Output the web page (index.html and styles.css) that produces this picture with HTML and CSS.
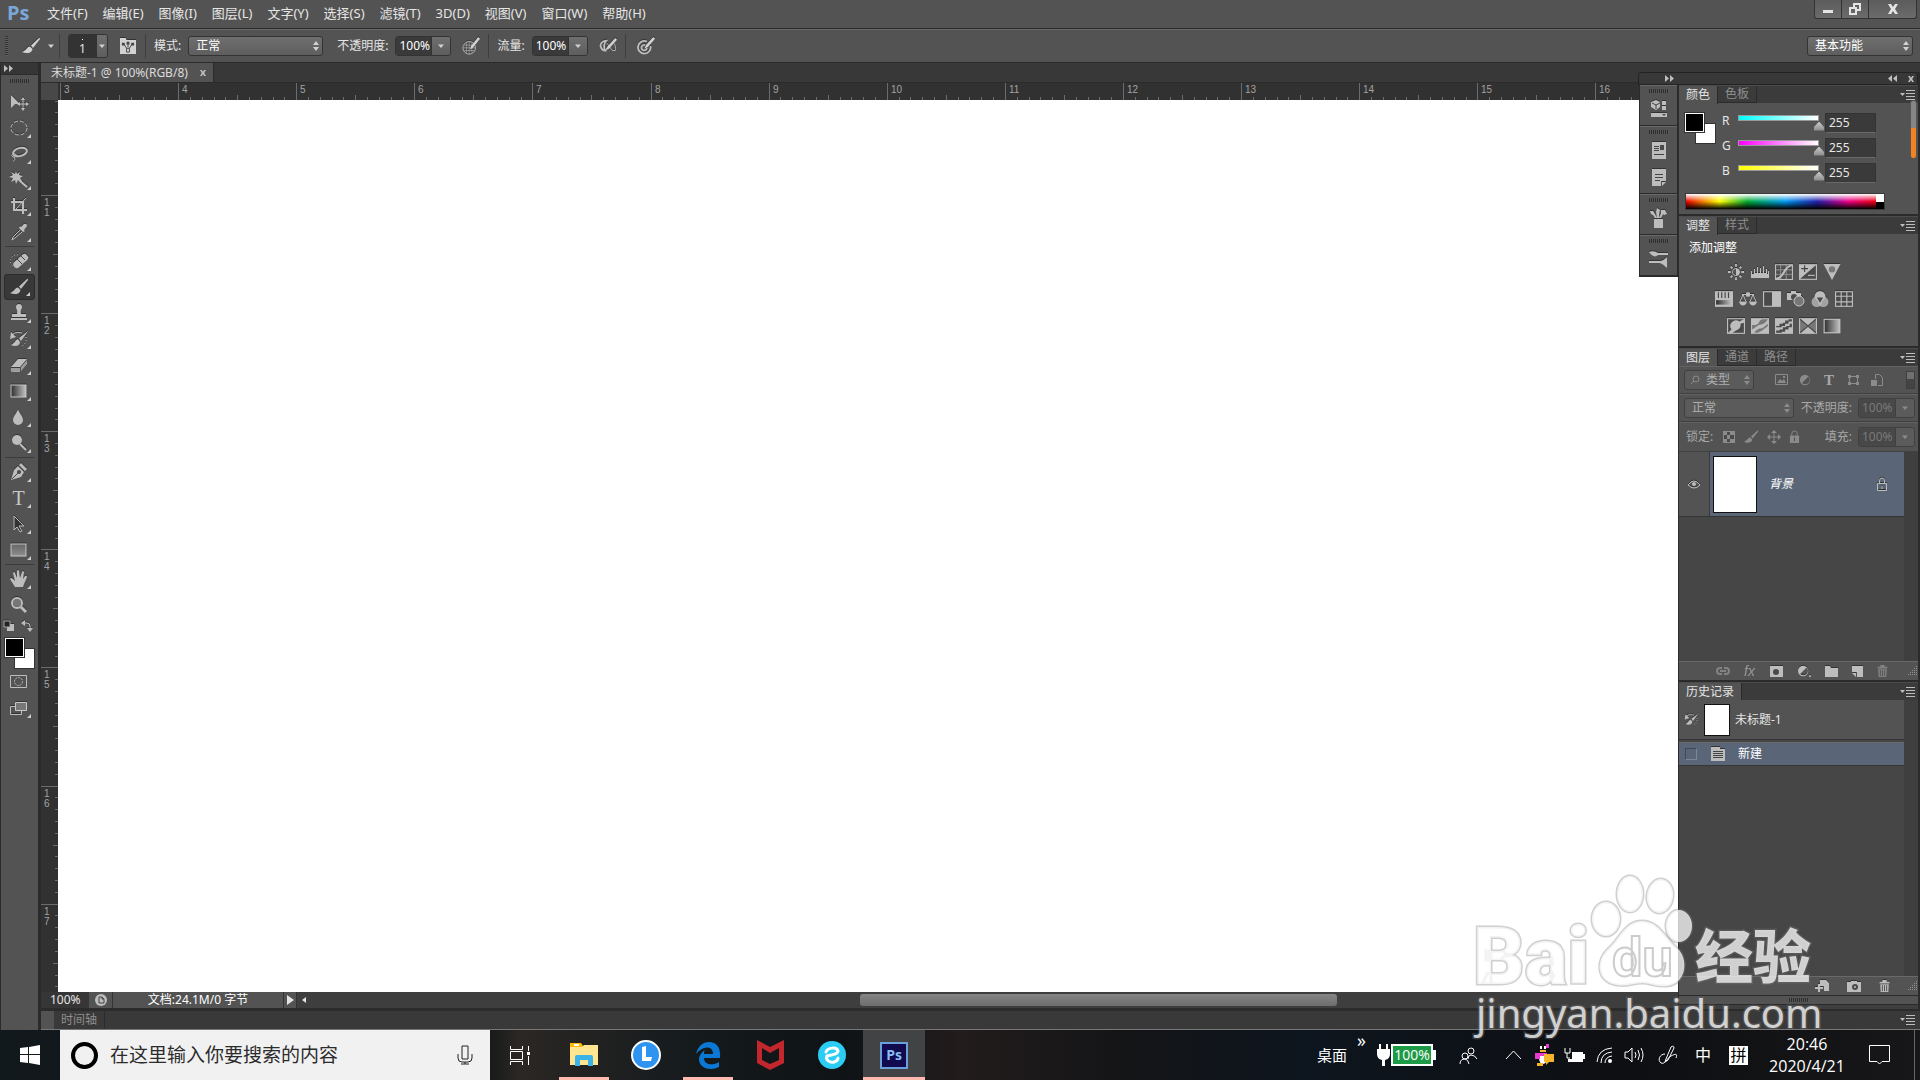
FILE: index.html
```html
<!DOCTYPE html>
<html lang="zh-CN">
<head>
    <meta charset="UTF-8">
    <meta name="viewport" content="width=device-width, initial-scale=1.0">
    <title>未标题-1 @ 100%(RGB/8)</title>
    <link rel="stylesheet" href="styles.css">
</head>
<body>
    <svg class="defs" aria-hidden="true">
        <defs>
            <linearGradient id="g-fade" x1="0" x2="1"><stop offset="0" stop-color="#2e2e2e"/><stop offset="1" stop-color="#c4c4c4"/></linearGradient>
            <linearGradient id="g-down" x1="0" x2="0" y1="0" y2="1"><stop offset="0" stop-color="#666"/><stop offset="1" stop-color="#8e8e8e"/></linearGradient>
        </defs>
        <symbol id="i-brush" viewBox="0 0 20 20"><path d="M18.500 1.500 L10 9.500 L12 12 L19 3 Z"/><path d="M9 10.500 C6 10.500 6 14 1 16 C5 18 11 17.500 11.500 13 Z"/></symbol>
        <symbol id="i-updown" viewBox="0 0 8 12"><path d="M4 1 L7 5 H1 Z M4 11 L7 7 H1 Z"/></symbol>
        <symbol id="i-caret" viewBox="0 0 8 8"><path d="M1 2.500 H7 L4 6 Z"/></symbol>
        <symbol id="i-menu" viewBox="0 0 16 10"><path d="M0 3 H5 L2.500 6 Z M6 0 H15 V1 H6 Z M6 3 H15 V4 H6 Z M6 6 H15 V7 H6 Z M6 9 H15 V10 H6 Z"/></symbol>
        <symbol id="i-fwd" viewBox="0 0 9 7"><path d="M0 0 L4 3.500 L0 7 Z M5 0 L9 3.500 L5 7 Z"/></symbol>
        <symbol id="i-back" viewBox="0 0 9 7"><path d="M4 0 L0 3.500 L4 7 Z M9 0 L5 3.500 L9 7 Z"/></symbol>
        <symbol id="i-close" viewBox="0 0 10 10"><path d="M0 0 H3 L5 3 L7 0 H10 L7 5 L10 10 H7 L5 7 L3 10 H0 L3 5 Z"/></symbol>
        <symbol id="i-trash" viewBox="0 0 12 14"><path d="M0 2 H3.500 V0 H8.500 V2 H12 V4 H0 Z M1 5 H11 L10.500 14 H1.500 Z"/><path class="cut" d="M3.500 6 V13 M6 6 V13 M8.500 6 V13"/></symbol>
        <symbol id="i-lock" viewBox="0 0 12 14"><path d="M1 6 H11 V14 H1 Z"/><path class="line" d="M3 6 V4 A3 3 0 0 1 9 4 V6"/><path class="cut" d="M6 8 V12"/></symbol>
        <symbol id="i-lock-open" viewBox="0 0 12 14"><path class="line" d="M1.500 6.500 H10.500 V13.500 H1.500 Z M3.500 6 V4 A2.500 3 0 0 1 8.500 4 V6 M6 9 V12"/></symbol>
        <symbol id="i-resize" viewBox="0 0 10 10"><path d="M8 0h1v1h-1z M6 2h1v1h-1z M8 2h1v1h-1z M4 4h1v1h-1z M6 4h1v1h-1z M8 4h1v1h-1z M2 6h1v1h-1z M4 6h1v1h-1z M6 6h1v1h-1z M8 6h1v1h-1z M0 8h1v1h-1z M2 8h1v1h-1z M4 8h1v1h-1z M6 8h1v1h-1z M8 8h1v1h-1z"/></symbol>
        <symbol id="i-history" viewBox="0 0 20 20"><path d="M19 2 L10 9 L12 12 Z M9 10 C6 11 6 14 2 16 C6 18 11 17 11 13 Z"/><path class="line" d="M2 8 C4 3 9 3 13 4"/><path d="M2 3 L1 10 L7 8 Z"/><path class="line" stroke-dasharray="1 2" d="M17 8 C18 12 16 16 12 17"/></symbol>
        <symbol id="i-halfcircle" viewBox="0 0 14 14"><path fill-rule="evenodd" d="M7 1 A6 6 0 1 1 7 13 A6 6 0 1 1 7 1 Z M3.500 10.500 A5 5 0 0 0 11 3 Z"/></symbol>
    </svg>

    <div class="app">
        <header class="menubar">
            <span class="logo">Ps</span>
            <nav class="menu">
                <button>文件(F)</button>
                <button>编辑(E)</button>
                <button>图像(I)</button>
                <button>图层(L)</button>
                <button>文字(Y)</button>
                <button>选择(S)</button>
                <button>滤镜(T)</button>
                <button>3D(D)</button>
                <button>视图(V)</button>
                <button>窗口(W)</button>
                <button>帮助(H)</button>
            </nav>
            <div class="window-buttons">
                <button aria-label="最小化"><svg width="10" height="10"><path d="M0 6 H10 V9 H0 Z"/></svg></button>
                <button aria-label="还原"><svg width="12" height="12"><path fill-rule="evenodd" d="M4 0 H12 V8 H8 V12 H0 V4 H4 Z M6 2 V4 H8 V6 H10 V2 Z M2 6 V10 H6 V6 Z"/></svg></button>
                <button class="wide" aria-label="关闭"><svg width="10" height="10"><use href="#i-close"/></svg></button>
            </div>
        </header>

        <div class="options">
            <span class="vgrip"></span>
            <button class="plain current-tool" aria-label="画笔工具"><svg class="icon" width="20" height="20"><use href="#i-brush"/></svg><svg width="8" height="8"><use href="#i-caret"/></svg></button>
            <span class="rule"></span>
            <div class="combo brush-size"><span class="size-value"><i></i>1</span><button aria-label="画笔预设"><svg width="8" height="8"><use href="#i-caret"/></svg></button></div>
            <button class="plain brush-panel" aria-label="切换画笔面板"><svg class="icon" width="16" height="16" viewBox="0 0 17 17"><path d="M0 0 H6 L7 2 H17 V17 H0 Z"/><path class="cut" d="M4 6 L7 11 M8.500 5 V10 M13 6 L10 11 M7 11 H10 V15 H7 Z"/><path class="blob" d="M2 5h3v3h-3z M7 4h3v3h-3z M12 5h3v3h-3z"/></svg></button>
            <span class="rule"></span>
            <label for="mode">模式:</label>
            <span class="select mode"><select id="mode"><option>正常</option></select><svg width="8" height="12"><use href="#i-updown"/></svg></span>
            <label for="opacity">不透明度:</label>
            <div class="combo"><input id="opacity" value="100%"><button aria-label="不透明度滑块"><svg width="8" height="8"><use href="#i-caret"/></svg></button></div>
            <button class="plain pressure" aria-label="不透明度压力"><svg class="icon" width="18" height="18" viewBox="0 0 20 20"><circle class="line" cx="8" cy="12" r="7"/><path class="line faint" d="M2 9 H12 M1 12 H15 M2 15 H14 M5 6 V18 M8 5 V19 M11 6 V18"/><path d="M18 0 L20 2 L12 12 L9 14 L10 10 Z"/></svg></button>
            <span class="rule"></span>
            <label for="flow">流量:</label>
            <div class="combo"><input id="flow" value="100%"><button aria-label="流量滑块"><svg width="8" height="8"><use href="#i-caret"/></svg></button></div>
            <button class="plain pressure" aria-label="喷枪"><svg class="icon" width="18" height="18" viewBox="0 0 20 20"><path class="line bold" d="M8 4 C3 4 1 8 2 11 C3 14 5 15 7 15 C5 12 5 7 8 4 Z"/><path class="line" d="M9 7 L15 15 H18 C19 12 18 9 17 7"/><path d="M18 1 L20 3 L11 13 L7 15 L9 11 Z"/></svg></button>
            <span class="rule"></span>
            <button class="plain pressure" aria-label="大小压力"><svg class="icon" width="18" height="18" viewBox="0 0 20 20"><path class="line bold" d="M11 5 A7 7 0 1 0 15 10 M9 9 A3 3 0 1 0 11 12"/><path d="M18 0 L20 2 L12 11 L8 13 L10 9 Z"/></svg></button>
            <span class="select workspace-select"><select aria-label="工作区"><option>基本功能</option></select><svg width="8" height="12"><use href="#i-updown"/></svg></span>
        </div>

        <div class="workspace">
            <aside class="toolbox">
                <div class="toolbox-head"><svg width="9" height="7"><use href="#i-fwd"/></svg></div>
                <span class="grip"></span>
                <button class="tool single" aria-label="移动"><svg class="icon" viewBox="0 0 20 20"><path d="M2 3 L11 12 L6 12 L2 16 Z"/><path class="line" d="M14 7 V17 M9 12 H19"/><path d="M14 5 L16 8 H12 Z M14 19 L16 16 H12 Z M8 12 L11 10 V14 Z M20 12 L17 10 V14 Z"/></svg></button>
                <button class="tool" aria-label="椭圆选框"><svg class="icon" viewBox="0 0 20 20"><ellipse class="line" cx="10" cy="10" rx="8" ry="7" stroke-dasharray="4 2"/></svg></button>
                <button class="tool" aria-label="套索"><svg class="icon" viewBox="0 0 20 20"><ellipse class="line bold" cx="11" cy="8" rx="7" ry="4" transform="rotate(-14 11 8)"/><path class="line" d="M6 10 C2 9 2 13 5 13 C8 13 8 10 6 10 M5 13 C7 15 5 17 4 17"/></svg></button>
                <button class="tool" aria-label="魔棒"><svg class="icon" viewBox="0 0 20 20"><path d="M7 1 L8 4 L11 2 L10 5 L14 6 L11 8 L13 11 L9 10 L7 14 L6 10 L2 12 L4 8 L0 7 L4 5 L2 2 L6 4 Z"/><path class="line bold" d="M10 10 L18 17"/></svg></button>
                <button class="tool" aria-label="裁剪"><svg class="icon" viewBox="0 0 20 20"><path class="line bold" d="M5 2 V14 H18 M2 6 H14 V18"/><path class="line" d="M7 13 L17 2"/></svg></button>
                <button class="tool" aria-label="吸管"><svg class="icon" viewBox="0 0 20 20"><path d="M12 5 L15 2 Q18 1 18 4 L15 8 L16 9 L14 10 L10 6 L11 4 Z"/><path class="line" d="M11 8 L4 15 L3 18 L6 16 L13 10"/></svg></button>
                <span class="tool-rule"></span>
                <button class="tool" aria-label="修复画笔"><svg class="icon" viewBox="0 0 20 20"><path class="line" stroke-dasharray="1 2" d="M9 4 A6 6 0 1 0 6 16"/><rect x="3" y="7" width="17" height="7" rx="3" transform="rotate(-42 11 10)"/><path class="cut" d="M8 8 L13 13 M12 5 L16 9"/></svg></button>
                <button class="tool active" aria-label="画笔"><svg class="icon" viewBox="0 0 20 20"><use href="#i-brush"/></svg></button>
                <button class="tool" aria-label="仿制图章"><svg class="icon" viewBox="0 0 20 20"><path d="M7 4 A3 3 0 0 1 13 4 C13 6 11 7 12 11 H17 V14 H3 V11 H8 C9 7 7 6 7 4 Z M2 15 H18 V17 H2 Z"/></svg></button>
                <button class="tool" aria-label="历史记录画笔"><svg class="icon" viewBox="0 0 20 20"><use href="#i-history"/></svg></button>
                <button class="tool" aria-label="橡皮擦"><svg class="icon" viewBox="0 0 20 20"><path d="M9 4 H18 L11 12 H2 Z"/><path d="M2 13 H11 V17 H3 Q1 16 2 13 Z M12 12 L18 5 V9 L12 16 Z" opacity=".75"/></svg></button>
                <button class="tool" aria-label="渐变"><svg class="icon" viewBox="0 0 20 20"><rect x="2" y="4" width="15" height="12" style="fill: url(#g-fade)" class="framed"/></svg></button>
                <button class="tool" aria-label="模糊"><svg class="icon" viewBox="0 0 20 20"><path d="M9 2 C10 6 14 9 14 13 A5 5 0 0 1 4 13 C4 9 8 6 9 2 Z"/></svg></button>
                <button class="tool" aria-label="减淡"><svg class="icon" viewBox="0 0 20 20"><circle cx="8" cy="7" r="5"/><path class="line bold" d="M11 11 L17 17"/></svg></button>
                <span class="tool-rule"></span>
                <button class="tool" aria-label="钢笔"><svg class="icon" viewBox="0 0 20 20"><path d="M12 1 L18 7 L16 9 L10 3 Z M9 4 L15 10 L12 15 L2 18 L5 8 Z"/><path class="cut" d="M3 17 L9 11"/><circle class="hole" cx="10" cy="10" r="2"/></svg></button>
                <button class="tool type" aria-label="文字">T</button>
                <button class="tool" aria-label="路径选择"><svg class="icon" viewBox="0 0 20 20"><path class="dark-arrow" d="M5 2 L15 12 H10 L13 17 L11 18 L8 13 L5 16 Z"/></svg></button>
                <button class="tool" aria-label="矩形"><svg class="icon" viewBox="0 0 20 20"><rect x="2" y="4" width="15" height="12" style="fill: url(#g-down)" class="framed"/></svg></button>
                <span class="tool-rule"></span>
                <button class="tool" aria-label="抓手"><svg class="icon" viewBox="0 0 20 20"><path d="M6 18 L1 10 Q2 8 4 10 L6 12 L4 4 Q5 2 6 4 L8 9 L8 2 Q9 0 10 2 L11 9 L13 3 Q14 1 15 3 L14 10 L16 7 Q18 6 18 8 L15 15 L14 18 Z"/></svg></button>
                <button class="tool single" aria-label="缩放"><svg class="icon" viewBox="0 0 20 20"><circle class="line bold" cx="8" cy="8" r="5"/><circle cx="8" cy="8" r="4" opacity=".4"/><path class="line thick" d="M12 12 L17 17"/></svg></button>
                <div class="color-mini">
                    <svg class="icon" width="12" height="11"><path d="M4 4 H11 V11 H4 Z"/><path class="mini-black" d="M1 1 H7 V7 H1 Z"/></svg>
                    <svg class="icon" width="12" height="12"><path class="line" d="M3 3 H6 Q9 3 9 6 V9"/><path d="M0 3 L4 0 V6 Z M9 12 L6 8 H12 Z"/></svg>
                </div>
                <div class="swatches"><span class="back"></span><span class="front"></span></div>
                <button class="tool single mask" aria-label="快速蒙版"><svg width="20" height="20"><path class="line" d="M1.500 3.500 H17.500 V15.500 H1.500 Z"/><circle class="line" cx="9.500" cy="9.500" r="4" stroke-dasharray="2 1"/></svg></button>
                <button class="tool" aria-label="屏幕模式"><svg class="icon" viewBox="0 0 20 20"><path class="line" d="M1.500 8.500 H12.500 V16.500 H1.500 Z"/><path class="framed mid" d="M6.500 4.500 H17.500 V12.500 H6.500 Z"/></svg></button>
            </aside>

            <div class="stage">
                <div class="main-row">
                    <section class="document">
                        <div class="doc-tabs"><div class="doc-tab">未标题-1 @ 100%(RGB/8)<button class="plain" aria-label="关闭文档"><svg width="6" height="6" viewBox="0 0 10 10"><use href="#i-close"/></svg></button></div></div>
                        <div class="canvas-area">
                            <span class="corner"></span>
                            <svg class="ruler" id="rulerX"></svg>
                            <svg class="ruler" id="rulerY"></svg>
                            <div class="canvas"></div>
                        </div>
                        <div class="status">
                            <input class="zoom" value="100%" aria-label="缩放比例">
                            <span class="status-icon"><svg width="12" height="12"><circle cx="6" cy="6" r="6"/><path class="cut" d="M4 3 H7 L9 5 V9 H4 Z M7 3 V5 H9"/></svg></span>
                            <span class="doc-info">文档:24.1M/0 字节</span>
                            <button class="more" aria-label="更多信息"><svg width="7" height="10"><path d="M0 0 L7 5 L0 10 Z"/></svg></button>
                            <svg class="scroll-left" width="4" height="6"><path d="M4 0 V6 L0 3 Z"/></svg>
                            <div class="hscroll"><span></span></div>
                        </div>
                    </section>

                    <aside class="panels">
                        <div class="panels-head">
                            <svg width="9" height="7"><use href="#i-fwd"/></svg>
                            <svg class="push" width="9" height="7"><use href="#i-back"/></svg>
                            <svg width="6" height="6" viewBox="0 0 10 10"><use href="#i-close"/></svg>
                        </div>
                        <div class="dock">
                            <div class="dock-group"><span class="grip"></span><button class="plain" aria-label="属性"><svg class="icon" width="16" height="18"><path d="M5 0 L9 2 V7 L5 10 L0 7 V2 Z M11 1 H15 V5 H11 Z M11 6 H15 V10 H11 Z M0 13 H16 V17 H0 Z"/><path class="cut" d="M1 3 L5 5 L9 3 M5 5 V9"/><path class="hole" d="M11 14 H15 L13 16 Z"/></svg></button></div>
                            <div class="dock-group"><span class="grip"></span><button class="plain" aria-label="信息"><svg class="icon" width="14" height="17"><path d="M0 0 H14 V17 H0 Z"/><path class="cut" d="M2 4.500 H7 M2 6.500 H7 M2 8.500 H7 M2 12.500 H12"/><path class="hole" d="M8 3 H12 V8 H8 Z"/></svg></button><button class="plain" aria-label="注释"><svg class="icon" width="14" height="17"><path d="M0 0 H14 V12 H9 V17 H0 Z M10 17 V13 H14 Z"/><path class="cut" d="M3 5.500 H11 M3 8.500 H11 M3 11.500 H8"/></svg></button></div>
                            <div class="dock-group"><span class="grip"></span><button class="plain" aria-label="画笔预设"><svg class="icon" width="17" height="20"><path d="M4 11 H13 V20 H4 Z M0 3 L3 3 L5 6 L7 10 H5 L3 7 L1 6 Z M7 0 L10 2 L9 6 L9 10 H7 L6 4 Z M11 2 L15 2 L17 6 L14 7 L13 6 L11 10 H9 L11 5 Z"/></svg></button></div>
                            <div class="dock-group"><span class="grip"></span><button class="plain" aria-label="画笔"><svg class="icon" width="19" height="18"><path d="M0 2 Q5 0 9 3 H19 V5 H9 Q5 9 0 2 Z M0 11 H11 Q14 11 18 7 V18 Q14 14 11 13 H0 Z"/></svg></button></div>
                        </div>

                        <section class="panel color-panel">
                            <div class="tabs"><button class="on">颜色</button><button>色板</button><svg width="16" height="10"><use href="#i-menu"/></svg></div>
                            <div class="color-body">
                                <div class="color-rows">
                                    <div class="swatches"><span class="back"></span><span class="front"></span></div>
                                    <div class="channels">
                                        <div class="channel"><label for="r">R</label><input class="cyan" type="range" min="0" max="255" value="255" aria-label="红色"><input id="r" value="255"></div>
                                        <div class="channel"><label for="g">G</label><input class="magenta" type="range" min="0" max="255" value="255" aria-label="绿色"><input id="g" value="255"></div>
                                        <div class="channel"><label for="b">B</label><input class="yellow" type="range" min="0" max="255" value="255" aria-label="蓝色"><input id="b" value="255"></div>
                                    </div>
                                </div>
                                <div class="spectrum"><span></span></div>
                            </div>
                            <span class="meter"></span>
                        </section>

                        <section class="panel adjust-panel">
                            <div class="tabs"><button class="on">调整</button><button>样式</button><svg width="16" height="10"><use href="#i-menu"/></svg></div>
                            <p>添加调整</p>
                            <div class="adjust-icons">
                                <div>
                                    <svg class="icon" width="18" height="18" viewBox="0 0 18 18"><circle class="line" cx="9" cy="9" r="4"/><path d="M9 5 A4 4 0 0 1 9 13 Z"/><path class="line bold" d="M9 0 V3 M9 15 V18 M0 9 H3 M15 9 H18 M3 3 L5 5 M13 13 L15 15 M3 15 L5 13 M13 5 L15 3"/></svg>
                                    <svg class="icon" width="18" height="14" viewBox="0 0 18 14"><path d="M0 13 V6 H1 V9 H3 V4 H4 V8 H6 V2 H7 V8 H9 V3 H10 V8 H12 V1 H13 V8 H15 V4 H16 V9 H17 V6 H18 V13 Z"/></svg>
                                    <svg class="icon" width="16" height="14" viewBox="0 0 16 14"><path class="line" d="M.5 .5 H15.500 V13.500 H.5 Z"/><path class="line faint" d="M5 0 V14 M10 0 V14 M0 5 H16 M0 9 H16"/><path class="line bold" d="M1 13 C9 12 7 2 15 1"/></svg>
                                    <svg class="icon" width="16" height="14" viewBox="0 0 16 14"><path d="M0 0 H16 V14 H0 Z"/><path class="hole" d="M15 1 V13 H1 Z"/><path class="cut" d="M2 4 H8 M5 1 V7"/><path class="line" d="M8 10 H14"/></svg>
                                    <svg class="icon" width="16" height="15" viewBox="0 0 16 15"><path d="M0 0 H16 L8 15 Z"/><circle class="hole" cx="8" cy="5" r="3" opacity=".6"/></svg>
                                </div>
                                <div>
                                    <svg class="icon" width="16" height="14" viewBox="0 0 16 14"><path d="M0 0 H16 V14 H0 Z"/><path class="cut" d="M3 1 V6 M6 1 V6 M9 1 V6 M12 1 V6"/><rect x="1" y="8" width="14" height="4" style="fill: url(#g-fade)"/></svg>
                                    <svg class="icon" width="18" height="15" viewBox="0 0 18 15"><path class="line" d="M3 3 H15 M9 0 V5 M4 3 L1 10 M4 3 L7 10 M14 3 L11 10 M14 3 L17 10"/><path d="M7 1 H11 V5 H7 Z M0 10 H8 Q7 14 4 14 Q1 14 0 10 Z M10 10 H18 Q17 14 14 14 Q11 14 10 10 Z"/></svg>
                                    <svg class="icon" width="16" height="14" viewBox="0 0 16 14"><path d="M0 0 H16 V14 H0 Z"/><path class="hole" d="M1 1 H8 V13 H1 Z"/></svg>
                                    <svg class="icon" width="18" height="16" viewBox="0 0 18 16"><path d="M0 2 H4 V0 H9 V2 H14 V9 H0 Z"/><circle class="hole" cx="7" cy="6" r="3"/><circle class="framed mid" cx="12" cy="10" r="5"/></svg>
                                    <svg class="icon" width="16" height="15" viewBox="0 0 16 15"><circle cx="8" cy="5" r="5"/><circle cx="5" cy="10" r="5" opacity=".8"/><circle cx="11" cy="10" r="5" opacity=".8"/><path class="hole" d="M5 6 H11 L8 11 Z"/></svg>
                                    <svg class="icon" width="16" height="14" viewBox="0 0 16 14"><path d="M0 0 H16 V14 H0 Z"/><path class="hole" d="M1 1h4v3h-4z M6 1h4v3h-4z M11 1h4v3h-4z M1 5h4v4h-4z M6 5h4v4h-4z M11 5h4v4h-4z M1 10h4v3h-4z M6 10h4v3h-4z M11 10h4v3h-4z"/></svg>
                                </div>
                                <div>
                                    <svg class="icon" width="16" height="14" viewBox="0 0 16 14"><path d="M0 0 H16 V14 H0 Z"/><path class="hole" d="M1 13 V1 H15 L11 3 A5 5 0 0 0 4 10 Z M15 4 V13 H5 L8 11 A5 5 0 0 0 12 5 Z"/></svg>
                                    <svg class="icon" width="16" height="14" viewBox="0 0 16 14"><path d="M0 0 H16 V14 H0 Z"/><path class="hole" d="M1 6 Q6 7 8 2 L10 1 H15 Q12 6 7 6 L1 10 Z M3 13 Q5 9 10 9 L15 5 V7 L10 11 L6 13 Z" opacity=".6"/></svg>
                                    <svg class="icon" width="16" height="14" viewBox="0 0 16 14"><path d="M0 0 H16 V14 H0 Z"/><path class="hole" d="M1 7 H4 V5 H7 V4 H9 V2 H12 V1 H15 V3 H12 V5 H9 V7 H6 V8 H1 Z M1 12 V11 H4 V10 H7 V8 H10 V7 H13 V5 H15 V8 H12 V10 H9 V12 H6 V13 H1 Z"/></svg>
                                    <svg class="icon" width="16" height="14" viewBox="0 0 16 14"><path d="M0 0 H16 V14 H0 Z"/><path class="hole" d="M1 1 L7 7 L1 13 Z M15 1 L9 7 L15 13 Z" opacity=".6"/><path class="cut" d="M1 1 L15 13 M15 1 L1 13"/></svg>
                                    <svg class="icon" width="16" height="14" viewBox="0 0 16 14"><rect x="1" y="1" width="14" height="12" style="fill: url(#g-fade)" class="framed"/></svg>
                                </div>
                            </div>
                        </section>

                        <section class="panel layers-panel">
                            <div class="tabs"><button class="on">图层</button><button>通道</button><button>路径</button><svg width="16" height="10"><use href="#i-menu"/></svg></div>
                            <div class="layer-row dim">
                                <span class="select kind"><svg class="lens" width="10" height="10"><circle class="line" cx="6" cy="4" r="3"/><path class="line" d="M4 6 L1 9"/></svg><select aria-label="图层过滤"><option>类型</option></select><svg width="8" height="12"><use href="#i-updown"/></svg></span>
                                <div class="filters">
                                    <svg width="13" height="11" viewBox="0 0 13 11"><path class="line" d="M.5 .5 H12.500 V10.500 H.5 Z"/><path d="M2 9 L5 5 L7 7 L9 5 L11 9 Z M8 2h2v2h-2z"/></svg>
                                    <svg width="12" height="12" viewBox="0 0 14 14"><use href="#i-halfcircle"/></svg>
                                    <span class="t">T</span>
                                    <svg width="13" height="12" viewBox="0 0 13 12"><path class="line" d="M2.500 2.500 H10.500 V9.500 H2.500 Z"/><path d="M1 1h3v3h-3z M9 1h3v3h-3z M1 8h3v3h-3z M9 8h3v3h-3z"/></svg>
                                    <svg width="12" height="12" viewBox="0 0 12 12"><path class="line" d="M4.500 5 V.5 H8.500 L11.500 3.500 V11.500 H7"/><path d="M0 6 H6 V12 H0 Z"/></svg>
                                </div>
                                <span class="switch"></span>
                            </div>
                            <div class="layer-row dim">
                                <span class="select blend"><select aria-label="混合模式"><option>正常</option></select><svg width="8" height="12"><use href="#i-updown"/></svg></span>
                                <label for="layerOpacity">不透明度:</label>
                                <div class="combo"><input id="layerOpacity" value="100%"><button aria-label="图层不透明度"><svg width="8" height="8"><use href="#i-caret"/></svg></button></div>
                            </div>
                            <div class="layer-row dim">
                                <span class="lock-label">锁定:</span>
                                <div class="locks">
                                    <svg width="12" height="12"><path d="M0 0 H12 V12 H0 Z"/><path class="hole" d="M4 1h3v3h-3z M1 4h3v4h-3z M7 4h4v4h-4z M4 8h3v3h-3z"/></svg>
                                    <svg width="16" height="16" viewBox="0 0 20 20"><use href="#i-brush"/></svg>
                                    <svg width="14" height="14" viewBox="0 0 14 14"><path class="line" d="M7 2 V12 M2 7 H12"/><path d="M7 0 L10 3 H4 Z M7 14 L10 11 H4 Z M0 7 L3 4 V10 Z M14 7 L11 4 V10 Z"/></svg>
                                    <svg width="11" height="13" viewBox="0 0 12 14"><use href="#i-lock"/></svg>
                                </div>
                                <label for="fill">填充:</label>
                                <div class="combo"><input id="fill" value="100%"><button aria-label="填充不透明度"><svg width="8" height="8"><use href="#i-caret"/></svg></button></div>
                            </div>
                            <div class="list">
                                <div class="layer">
                                    <button class="plain eye" aria-label="可见性"><svg class="icon" width="12" height="9"><path class="line" d="M0 5 Q6 -3 12 5 Q6 11 0 5 Z"/><circle cx="6" cy="4" r="2"/></svg></button>
                                    <span class="thumb"></span>
                                    <em>背景</em>
                                    <svg class="icon" width="12" height="14"><use href="#i-lock-open"/></svg>
                                </div>
                            </div>
                            <div class="foot layers-foot">
                                <svg class="off" width="14" height="8" viewBox="0 0 14 8"><path class="line bold" d="M6 1 H4 A3 3 0 0 0 4 7 H6 M8 1 H10 A3 3 0 0 1 10 7 H8 M4 4 H10"/></svg>
                                <i class="fx off">fx</i>
                                <svg class="icon" width="13" height="11"><path d="M0 0 H13 V11 H0 Z"/><circle class="hole" cx="6" cy="6" r="3"/></svg>
                                <svg class="icon" width="14" height="12" viewBox="0 0 16 14"><use href="#i-halfcircle" width="14" height="14"/><path d="M14 12 H16 V14 H14 Z"/></svg>
                                <svg class="icon" width="13" height="11"><path d="M0 0 H5 L6 2 H13 V11 H0 Z"/></svg>
                                <svg class="icon" width="11" height="11"><path d="M0 0 H11 V11 H5 V6 H0 Z M0 7 H4 V11 Z"/></svg>
                                <svg class="off" width="11" height="12" viewBox="0 0 12 14"><use href="#i-trash"/></svg>
                                <svg class="resize" width="10" height="10"><use href="#i-resize"/></svg>
                            </div>
                        </section>

                        <section class="panel history-panel">
                            <div class="tabs"><button class="on">历史记录</button><svg width="16" height="10"><use href="#i-menu"/></svg></div>
                            <div class="list">
                                <div class="snapshot"><svg class="icon" width="15" height="15"><use href="#i-history"/></svg><span class="thumb"></span>未标题-1</div>
                                <div class="state"><input type="checkbox" aria-label="历史记录画笔的源"><svg class="icon" width="14" height="14"><path d="M0 0 H9 V2 H14 V14 H0 Z"/><path class="cut" d="M2 4.500 H12 M2 6.500 H12 M2 8.500 H12 M2 10.500 H12"/></svg>新建</div>
                            </div>
                            <div class="foot history-foot">
                                <svg class="icon" width="14" height="12"><path d="M5 0 H11 L14 3 V11 H9 V6 H5 Z"/><path class="line bold" d="M0 8 H8 M4 4 V12"/></svg>
                                <svg class="icon" width="14" height="11"><path d="M0 1 H4 V0 H10 V1 H14 V11 H0 Z"/><circle class="hole" cx="8" cy="6" r="3"/><circle cx="8" cy="6" r="1"/></svg>
                                <svg class="icon" width="11" height="12" viewBox="0 0 12 14"><use href="#i-trash"/></svg>
                                <svg class="resize" width="10" height="10"><use href="#i-resize"/></svg>
                            </div>
                        </section>
                        <div class="panels-end"><span class="grip"></span></div>
                        <div class="panels-tail"></div>
                    </aside>
                </div>
                <div class="timeline"><span class="stub"></span><button>时间轴</button><svg width="16" height="10"><use href="#i-menu"/></svg></div>
            </div>
        </div>

        <footer class="taskbar">
            <button class="start" aria-label="开始"><svg width="20" height="20"><path d="M0 3 L8 2 V9 H0 Z M9 2 L20 0 V9 H9 Z M0 10 H8 V18 L0 17 Z M9 10 H20 V20 L9 18 Z"/></svg></button>
            <div class="search">
                <span class="cortana"></span>
                <input type="text" placeholder="在这里输入你要搜索的内容" aria-label="搜索">
                <svg width="16" height="20" viewBox="0 0 16 20"><path d="M5 1 H11 V14 H5 Z M1 9 V13 Q1 17 5 17 H11 Q15 17 15 13 V9 M8 17 V19 M4 19 H12"/></svg>
            </div>
            <button class="task view" aria-label="任务视图"><svg width="20" height="19" viewBox="0 0 20 19"><path class="white-line" d="M.5 0 V3.500 H12.500 V0 M.5 5.500 H12.500 V13.500 H.5 Z M.5 19 V15.500 H12.500 V19 M18.500 0 V5 M18.500 10 V19"/><path class="white" d="M17 6h3v3h-3z"/></svg></button>
            <button class="task open" aria-label="文件资源管理器"><svg width="28" height="24"><path fill="#ffb900" d="M0 0 H11 L13 3 H20 V8 H0 Z"/><path fill="#ffe58f" d="M0 4 H12 L14 2 H28 V22 H0 Z"/><path fill="#fff" d="M4 1h5v2h-5z"/><path fill="#3bb3e8" d="M5 23 V14 Q5 12 7 12 H21 Q23 12 23 14 V23 H18 V17 H10 V23 Z"/></svg></button>
            <button class="task" aria-label="L"><svg width="30" height="30"><circle cx="15" cy="15" r="14" fill="#2f93f0" stroke="#fff" stroke-width="2"/><path fill="#fff" d="M11 7 L15 6 V17 H21 L20 21 H11 Z"/></svg></button>
            <button class="task open" aria-label="Edge"><svg width="25" height="27"><path fill="#0a78d4" d="M0 12 C2 4 7 0 13 0 C21 0 25 6 24 16 H8 C8 23 17 24 23 20 V25 C15 29 4 27 3 18 C3 13 6 10 9 8 C8 9 8 11 8 12 H17 C17 3 6 4 0 12 Z"/></svg></button>
            <button class="task" aria-label="McAfee"><svg width="27" height="30"><path fill="#c2272d" fill-rule="evenodd" d="M0 0 L13 7 L27 0 V23 L13 30 L0 23 Z M5 8 V20 L13 24 L22 20 V8 L13 13 Z"/></svg></button>
            <button class="task" aria-label="浏览器"><svg width="28" height="28"><circle cx="14" cy="14" r="14" fill="#2ccdf2"/><path fill="none" stroke="#fff" stroke-width="3" stroke-linecap="round" d="M8 11 C10 6 19 6 20 10 C20 13 14 14 9 15 C7 19 12 22 16 21 C19 20 20 18 20 17"/></svg></button>
            <button class="task open current" aria-label="Photoshop"><span class="ps">Ps</span></button>

            <div class="tray">
                <span class="desk">桌面</span><span class="chev">»</span>
                <svg class="plug" width="13" height="22"><path class="white" d="M2 0 H4 V5 H9 V0 H11 V5 H13 V10 Q13 15 8 16 V22 H5 V16 Q0 15 0 10 V5 H2 Z"/></svg>
                <span class="battery">100%</span>
                <svg class="people" width="20" height="20"><path class="white-line" d="M9 6 a3 3 0 1 1 6 0 a3 3 0 1 1 -6 0 M9 14 Q9 10 12 10 Q16 10 18 14 M3 11 a3 3 0 1 1 6 0 a3 3 0 1 1 -6 0 M1 19 Q1 14 6 14 Q9 14 10 19"/></svg>
                <svg class="up" width="17" height="10"><path class="white-line" d="M1 9 L8.500 1 L16 9"/></svg>
                <svg class="qq" width="20" height="22"><ellipse cx="8" cy="12" rx="6" ry="8" fill="#111"/><ellipse cx="8" cy="14" rx="4" ry="6" fill="#fff"/><circle cx="8" cy="5" r="5" fill="#111"/><path fill="#fff" d="M5 2h2v3h-2z M9 2h2v3h-2z"/><path fill="#e53bd0" d="M0 9 H12 V12 H5 V15 H0 Z M11 0 H14 V4 H11 Z"/><path fill="#f5b52a" d="M5 6h6v2h-6z M9 10h10v8h-5l-3 3v-3h-2z M2 19h6v3h-6z"/></svg>
                <svg class="bat2" width="21" height="14"><path class="white" d="M8 4 H19 V6 H21 V11 H19 V14 H4 V11 H8 Z"/><path class="white-line" d="M1 0 V5 H6 V0 M3 5 V10 H6"/></svg>
                <svg class="wifi" width="17" height="18"><path class="white-line" d="M1 16 Q2 3 16 2 M5 17 Q5 7 16 6 M9 17 Q9 11 16 10"/><circle class="white" cx="14" cy="15" r="2"/></svg>
                <svg class="vol" width="20" height="18"><path class="white-line" d="M1 6 H4 L8 2 V16 L4 12 H1 Z M11 6 Q13 9 11 12 M14 4 Q17 9 14 14 M17 2 Q21 9 17 16"/></svg>
                <svg class="pen" width="20" height="20"><path class="white-line" d="M8 14 L13 2 Q16 0 16 3 L10 15 L7 17 Z M7 9 C2 9 -1 15 3 18 C7 20 9 13 13 11 C17 9 20 8 18 13"/></svg>
                <span class="ime">中</span>
                <span class="ime-box">拼</span>
                <div class="clock"><span>20:46</span><span>2020/4/21</span></div>
                <svg class="note" width="21" height="20"><path class="white-line" d="M.5 .5 H20.500 V16.500 H13 L10.500 19 L8 16.500 H.5 Z"/></svg>
                <span class="edge"></span>
            </div>
        </footer>
    </div>

    <svg class="watermark" viewBox="0 0 370 180" width="370" height="180" role="img" aria-label="Baidu 经验">
        <g class="wm">
            <text class="wm-latin" x="12" y="123">Bai</text>
            <ellipse cx="145" cy="58" rx="14" ry="17"/>
            <ellipse cx="169" cy="33" rx="13" ry="18"/>
            <ellipse cx="199" cy="35" rx="13" ry="17" transform="rotate(8 199 35)"/>
            <ellipse cx="218" cy="65" rx="13" ry="16"/>
            <path d="M181 60 C198 60 204 77 216 87 C228 97 226 123 206 125 C194 126 190 122 181 122 C172 122 166 126 156 124 C135 121 134 99 148 87 C159 77 164 60 181 60 Z"/>
            <text class="wm-cjk" x="234" y="117">经验</text>
            <text class="wm-url" x="15" y="167">jingyan.baidu.com</text>
        </g>
        <text class="wm-du" x="151" y="115">du</text>
    </svg>
    <script src="script.js"></script>
</body>
</html>
```
FILE: styles.css
```css
:root {
    --bg: #535353;
    --dark: #3b3b3b;
    --well: #3a3a3a;
    --edge: #2b2b2b;
    --lite: #696969;
    --text: #e6e6e6;
    --icon: #bdbdbd;
    --blue: #5a6678;
}
* {
    box-sizing: border-box;
}
body {
    margin: 0;
    background: #282828;
    color: var(--text);
    font: 12px/16px "Noto Sans", "Noto Sans CJK SC", sans-serif;
    overflow: hidden;
}
button, input, select {
    margin: 0;
    padding: 0;
    border: 0;
    border-radius: 0;
    background: none;
    color: inherit;
    font: inherit;
    outline: none;
}
svg {
    display: block;
    flex: none;
    fill: var(--icon);
}
.defs {
    position: absolute;
    width: 0;
    height: 0;
}
.icon {
    filter: drop-shadow(0 -1px 0 #333);
}
.line {
    fill: none;
    stroke: var(--icon);
    stroke-width: 1;
}
.bold {
    stroke-width: 2;
}
.thick {
    stroke-width: 3;
}
.faint {
    opacity: .6;
}
.cut {
    fill: none;
    stroke: #444;
}
.blob {
    fill: #444;
}
.hole {
    fill: #4a4a4a;
}
.framed {
    stroke: #c8c8c8;
}
.mid {
    fill: #777;
}
.plain {
    display: flex;
    align-items: center;
}
.app {
    display: flex;
    flex-direction: column;
    height: 100vh;
}

/* menu bar */
.menubar {
    display: flex;
    align-items: center;
    height: 29px;
    padding-bottom: 2px;
    background: var(--bg);
    border-bottom: 1px solid var(--edge);
}
.logo {
    width: 40px;
    padding-left: 7px;
    color: #7ba7d8;
    font: bold 20px/24px "Open Sans", sans-serif;
}
.menu {
    display: flex;
}
.menu button {
    padding: 0 8px 0 7px;
    font-size: 13px;
}
.window-buttons {
    display: flex;
    align-self: flex-start;
    margin: 0 3px 0 auto;
    border: 1px solid #333;
    border-top: 0;
    border-radius: 0 0 3px 3px;
    background: linear-gradient(#5c5c5c, #6b6b6b);
}
.window-buttons button {
    display: flex;
    align-items: center;
    justify-content: center;
    width: 27px;
    height: 18px;
    border-right: 1px solid #333;
}
.window-buttons .wide {
    width: 47px;
    border-right: 0;
}
.window-buttons svg {
    fill: #e4e4e4;
}

/* options bar */
.options {
    display: flex;
    align-items: center;
    height: 34px;
    padding: 0 7px 1px 5px;
    background: var(--bg);
    border-top: 1px solid var(--lite);
    border-bottom: 1px solid var(--edge);
}
.options svg {
    fill: #d2d2d2;
}
.vgrip {
    width: 3px;
    height: 20px;
    margin-right: 13px;
    background: repeating-linear-gradient(#333 0 1px, #5e5e5e 1px 2px);
}
.current-tool {
    gap: 6px;
    width: 38px;
}
.rule {
    width: 1px;
    height: 24px;
    background: #3e3e3e;
}
.select {
    position: relative;
    display: inline-flex;
    align-items: center;
}
.select select {
    appearance: none;
    width: 100%;
    height: 20px;
    padding-left: 7px;
    border: 1px solid #333;
    border-radius: 3px;
    background: linear-gradient(#6f6f6f, #5e5e5e);
    color: #fff;
}
.select svg {
    position: absolute;
    right: 3px;
    pointer-events: none;
}
.combo {
    display: flex;
    height: 20px;
    border: 1px solid #333;
    border-radius: 3px;
    overflow: hidden;
}
.combo input {
    width: 35px;
    padding-left: 3px;
    background: var(--well);
    color: #fff;
}
.combo button {
    display: flex;
    align-items: center;
    justify-content: center;
    width: 19px;
    background: linear-gradient(#6f6f6f, #5e5e5e);
    border-left: 1px solid #333;
}
.brush-size {
    height: 24px;
    margin: 0 12px 0 8px;
}
.brush-size button {
    width: 11px;
}
.size-value {
    width: 27px;
    padding-top: 6px;
    background: #333;
    text-align: center;
}
.size-value i {
    display: block;
    width: 1px;
    height: 1px;
    margin: -2px auto 1px;
    background: #fff;
}
.brush-panel {
    margin-right: 9px;
}
.options label {
    margin-left: 8px;
}
.mode {
    width: 135px;
    margin: 0 6px 0 7px;
}
.options label + .combo {
    margin-left: 7px;
}
.pressure {
    margin: 0 8px 0 11px;
}
.workspace-select {
    width: 106px;
    margin-left: auto;
}

/* workspace */
.workspace {
    display: flex;
    flex: 1;
    min-height: 0;
}
.toolbox {
    display: flex;
    flex-direction: column;
    align-items: center;
    width: 41px;
    border: 1px solid var(--edge);
    border-width: 0 3px 0 1px;
    background: var(--bg);
}
.toolbox-head {
    align-self: stretch;
    height: 12px;
    padding: 2px 3px;
    background: #363636;
    border-bottom: 1px solid var(--edge);
}
.grip {
    display: block;
    width: 20px;
    height: 4px;
    background: repeating-linear-gradient(90deg, #2e2e2e 0 1px, #555 1px 2px);
}
.toolbox .grip {
    margin: 4px 0 6px;
}
.tool {
    position: relative;
    flex: none;
    display: flex;
    align-items: center;
    justify-content: center;
    width: 31px;
    height: 26px;
    padding-right: 2px;
}
.tool svg {
    width: 20px;
    height: 20px;
}
.tool::after {
    content: "";
    position: absolute;
    right: 4px;
    bottom: 3px;
    border: 2px solid #ccc;
    border-top-color: transparent;
    border-left-color: transparent;
}
.single::after {
    display: none;
}
.tool.active {
    background: #383838;
    border: 1px solid #2b2b2b;
    border-radius: 3px;
}
.tool.type {
    color: #c8c8c8;
    font: 20px/26px "Liberation Serif", serif;
}
.dark-arrow {
    fill: #333;
    stroke: #bbb;
}
.tool-rule {
    width: 29px;
    height: 1px;
    margin: 1px 0;
    background: #3a3a3a;
    flex: none;
}
.color-mini {
    display: flex;
    gap: 6px;
    margin: 2px 4px 6px 0;
}
.mini-black {
    fill: #222;
    stroke: #aaa;
}
.swatches {
    position: relative;
    width: 30px;
    height: 30px;
}
.toolbox .swatches {
    width: 29px;
}
.swatches span {
    position: absolute;
    top: 0;
    left: 0;
    width: 19px;
    height: 19px;
    background: #000;
    border: 1px solid #fff;
    outline: 1px solid #333;
}
.swatches .back {
    top: auto;
    left: auto;
    right: 0;
    bottom: 0;
    background: #fff;
}
.tool.mask {
    margin-top: 1px;
}
.stage {
    display: flex;
    flex-direction: column;
    flex: 1;
    min-width: 0;
}
.main-row {
    display: flex;
    flex: 1;
    min-height: 0;
    background: #383838;
}
.document {
    display: flex;
    flex-direction: column;
    flex: 1;
    min-width: 0;
}
.doc-tabs {
    height: 20px;
    border-bottom: 1px solid var(--edge);
}
.doc-tab {
    display: inline-flex;
    align-items: center;
    gap: 12px;
    height: 19px;
    padding: 1px 7px 0 10px;
    border-right: 1px solid var(--edge);
    background: var(--bg);
    color: #dcdcdc;
}
.canvas-area {
    display: grid;
    grid-template: 17px 1fr / 17px 1fr;
    flex: 1;
    min-height: 0;
}
.corner {
    background: #484848;
}
.ruler {
    width: 100%;
    height: 100%;
    background: #313131;
    overflow: hidden;
}
.ruler path {
    stroke: #6c6c6c;
}
.ruler text {
    fill: #a3a3a3;
    font: 10px "Liberation Sans", sans-serif;
}
.canvas {
    background: #fff;
}
.status {
    display: flex;
    align-items: center;
    height: 17px;
    border-bottom: 1px solid var(--edge);
    background: #3e3e3e;
}
.zoom {
    width: 48px;
    height: 16px;
    padding-left: 9px;
    background: #363636;
}
.status-icon, .doc-info, .more {
    display: flex;
    align-items: center;
    justify-content: center;
    width: 24px;
    height: 16px;
    background: var(--bg);
    border-right: 1px solid #333;
}
.doc-info {
    width: 171px;
    color: #fff;
}
.more {
    width: 13px;
}
.more svg, .scroll-left {
    fill: #e4e4e4;
}
.scroll-left {
    margin: 0 9px 0 5px;
}
.hscroll {
    flex: 1;
    height: 12px;
}
.hscroll span {
    display: block;
    width: 35%;
    height: 12px;
    margin-left: 40%;
    border-radius: 3px;
    background: linear-gradient(#858585, #6d6d6d);
}

/* right panels */
.panels {
    position: relative;
    display: flex;
    flex-direction: column;
    width: 242px;
    margin-top: 9px;
    background: var(--edge);
    border: 1px solid var(--edge);
    border-width: 0 2px 0 1px;
}
.panels-head {
    display: flex;
    align-items: center;
    gap: 11px;
    height: 13px;
    margin-left: -41px;
    padding: 0 3px 0 26px;
    border: 1px solid #232323;
    border-radius: 3px 3px 0 0;
    background: #383838;
}
.push {
    margin-left: auto;
}
.dock {
    position: absolute;
    top: 13px;
    right: 100%;
    width: 40px;
    border: 1px solid var(--edge);
    border-width: 0 2px 1px 1px;
    background: var(--edge);
}
.dock-group {
    display: flex;
    flex-direction: column;
    align-items: center;
    gap: 7px;
    margin-bottom: 1px;
    padding: 3px 0 6px;
    border-top: 1px solid var(--lite);
    background: var(--bg);
}
.dock-group .plain {
    height: 20px;
}
.dock-group .grip {
    margin-bottom: -1px;
}
.panel {
    display: flex;
    flex-direction: column;
    margin-bottom: 2px;
    background: var(--bg);
}
.tabs {
    display: flex;
    align-items: center;
    height: 18px;
    background: var(--dark);
    border-top: 1px solid #4c4c4c;
}
.tabs button {
    height: 17px;
    padding: 0 7px;
    border-right: 1px solid var(--edge);
    border-bottom: 1px solid var(--edge);
    color: #8f8f8f;
}
.tabs button.on {
    height: 18px;
    border-bottom: 0;
    background: var(--bg);
    color: #e4e4e4;
}
.tabs svg {
    margin: 0 2px 0 auto;
}
.color-panel {
    position: relative;
    height: 129px;
}
.color-body {
    padding: 10px 0 0 6px;
}
.color-rows {
    display: flex;
    gap: 7px;
}
.channels {
    display: flex;
    flex-direction: column;
    gap: 5px;
}
.channel {
    display: flex;
    height: 20px;
}
.channel label {
    width: 11px;
}
.channel input {
    width: 51px;
    padding-left: 3px;
    background: var(--well);
    border: 1px solid #333;
    border-bottom-color: var(--lite);
}
.channel input[type=range] {
    appearance: none;
    width: 92px;
    height: 17px;
    margin: 2px 0 0;
    padding: 0;
    border: 0;
    background: linear-gradient(90deg, var(--from), #fff) 6px 1px / 79px 4px no-repeat, linear-gradient(#999, #999) 5px 0 / 81px 6px no-repeat;
}
.channel input[type=range]::-webkit-slider-thumb {
    appearance: none;
    width: 12px;
    height: 9px;
    margin-top: 5px;
    background: linear-gradient(#ccc, #888);
    clip-path: polygon(50% 0, 92% 60%, 92% 100%, 8% 100%, 8% 60%);
}
.cyan { --from: #0ff; }
.magenta { --from: #f0f; }
.yellow { --from: #ff0; }
.spectrum {
    display: flex;
    justify-content: flex-end;
    width: 200px;
    height: 17px;
    margin-top: 10px;
    border: 1px solid #3a3a3a;
    background: linear-gradient(#fff, transparent 50%, #000), linear-gradient(90deg, #e00 0, #ff0 17%, #0a3 31%, #09e 50%, #22a 66%, #e08 82%, #e01 96%);
}
.spectrum span {
    width: 8px;
    background: linear-gradient(#fff 50%, #000 50%);
}
.meter {
    position: absolute;
    top: 15px;
    right: 1px;
    width: 7px;
    height: 59px;
    border: 1px solid #555;
    border-radius: 3px;
    background: linear-gradient(#858585 48%, #f58220 48%);
}
.adjust-panel {
    height: 130px;
}
.adjust-panel p {
    margin: 6px 0 8px 10px;
    color: #fff;
}
.adjust-icons {
    display: flex;
    flex-direction: column;
    gap: 9px;
    width: 210px;
}
.adjust-icons div {
    display: flex;
    justify-content: center;
    gap: 0 6px;
    height: 18px;
}
.adjust-icons svg {
    width: 18px;
    height: 16px;
}
.layers-panel {
    height: 332px;
}
.layer-row {
    display: flex;
    align-items: center;
    height: 28px;
    padding: 0 3px 1px 5px;
    border-top: 1px solid #626262;
    border-bottom: 1px solid #404040;
}
.layer-row:nth-child(4) {
    height: 30px;
}
.dim {
    --icon: #8b8b8b;
    color: #a8a8a8;
}
.dim select {
    border-color: #404040;
    background: #5b5b5b;
    color: #b0b0b0;
}
.dim .combo {
    margin-left: 6px;
    border-color: #404040;
}
.dim .combo input {
    width: 36px;
    background: #484848;
    color: #7a7a7a;
}
.dim .combo button {
    background: #5b5b5b;
    border-color: #404040;
}
.dim label {
    margin-left: auto;
}
.kind {
    width: 70px;
}
.kind select {
    padding-left: 21px;
}
.kind .lens {
    left: 6px;
}
.blend {
    width: 110px;
}
.filters {
    display: grid;
    grid-template-columns: repeat(5, 24px);
    align-items: center;
    justify-items: center;
    margin-left: 15px;
}
.t {
    font: bold 15px/16px "Liberation Serif", serif;
}
.switch {
    width: 9px;
    height: 18px;
    margin-left: auto;
    border: 1px solid #3e3e3e;
    background: linear-gradient(#707070 45%, #444 45%);
}
.locks {
    display: flex;
    align-items: center;
    gap: 8px;
    margin-left: 10px;
}
.lock-label {
    margin-left: 2px;
}
.list {
    flex: 1;
    padding-right: 14px;
    background: linear-gradient(#3f3f3f, #3f3f3f) right / 14px 100% no-repeat #464646;
}
.layer {
    display: flex;
    align-items: center;
    height: 65px;
    padding-right: 16px;
    border-bottom: 1px solid #353535;
    background: var(--blue);
    color: #fff;
}
.eye {
    justify-content: center;
    align-self: stretch;
    width: 31px;
    margin-right: 3px;
    border-right: 1px solid #3a3a3a;
    background: var(--bg);
}
.thumb {
    width: 44px;
    height: 57px;
    border: 1px solid #111;
    background: #fff;
}
.layer em {
    flex: 1;
    margin-left: 12px;
}
.foot {
    display: flex;
    align-items: center;
    height: 19px;
    border-top: 1px solid var(--lite);
}
.layers-foot {
    gap: 14px;
    padding-left: 37px;
}
.fx {
    width: 12px;
    font: italic 14px/16px "Liberation Sans", sans-serif;
}
.off {
    opacity: .45;
}
.foot .resize {
    margin-left: auto;
    opacity: .6;
}
.history-panel {
    flex: 1;
    min-height: 0;
    margin-bottom: 1px;
}
.snapshot {
    display: flex;
    align-items: center;
    gap: 5px;
    height: 40px;
    padding-left: 5px;
    border-bottom: 1px solid #353535;
    background: var(--bg);
}
.snapshot .thumb {
    width: 26px;
    height: 32px;
}
.state {
    display: flex;
    align-items: center;
    height: 24px;
    margin-top: 2px;
    padding-left: 6px;
    border-top: 1px solid #6a6a6a;
    border-bottom: 1px solid #353535;
    background: var(--blue);
    color: #fff;
}
.state input {
    appearance: none;
    width: 12px;
    height: 12px;
    border: 1px solid #3f4a59;
    border-right-color: #7a8798;
    border-bottom-color: #7a8798;
}
.state svg {
    margin: 0 13px 0 14px;
}
.history-foot {
    justify-content: flex-end;
    gap: 18px;
}
.history-foot .resize {
    margin-left: 0;
}
.panels-end {
    display: flex;
    justify-content: center;
    height: 8px;
    padding-top: 2px;
    background: var(--bg);
}
.panels-tail {
    height: 4px;
    margin-top: 1px;
    background: #3f3f3f;
}
.timeline {
    display: flex;
    align-items: center;
    height: 21px;
    border-top: 2px solid var(--edge);
    border-bottom: 1px solid #777;
    background: #393939;
}
.timeline .stub {
    align-self: stretch;
    width: 13px;
    background: var(--bg);
}
.timeline button {
    align-self: stretch;
    padding: 0 7px;
    border-right: 1px solid var(--edge);
    color: #8f8f8f;
}
.timeline svg {
    margin: 0 4px 0 auto;
}

/* windows taskbar */
.taskbar {
    display: flex;
    height: 50px;
    background: linear-gradient(90deg, #12191d 0, #101518 25%, #2b2724 27%, #151a1d 36%, #0f1316 44%, #221c1c 50%, #151517 58%, #0d151e 68%, #0e0f12 85%, #171719);
    font: 15px/22px "Open Sans", "Noto Sans CJK SC", sans-serif;
    color: #fff;
}
.start {
    display: flex;
    align-items: center;
    justify-content: center;
    width: 60px;
}
.start svg, .white {
    fill: #fff;
}
.white-line {
    fill: none;
    stroke: #fff;
}
.search {
    display: flex;
    align-items: center;
    width: 430px;
    padding: 0 17px 0 11px;
    background: #f1f1f1;
}
.search input {
    flex: 1;
    min-width: 0;
    margin-left: 12px;
    font-size: 19px;
    line-height: 28px;
}
.search input::placeholder {
    color: #2c2c2c;
}
.search svg {
    fill: none;
    stroke: #222;
}
.cortana {
    width: 27px;
    height: 27px;
    border: 4px solid #000;
    border-radius: 50%;
}
.task {
    position: relative;
    display: flex;
    align-items: center;
    justify-content: center;
    width: 62px;
}
.task.view {
    width: 63px;
    padding-right: 3px;
}
.task.open::after {
    content: "";
    position: absolute;
    bottom: 0;
    left: 6px;
    right: 6px;
    height: 3px;
    background: #ffb9ae;
}
.task.current {
    background: #414345;
}
.task.current::after {
    left: 0;
    right: 0;
}
.ps {
    width: 28px;
    height: 27px;
    border: 2px solid #6a9fdc;
    background: #110a4e;
    color: #86bdf5;
    font: bold 14px/22px "Open Sans", sans-serif;
}
.tray {
    display: flex;
    align-items: center;
    margin-left: auto;
}
.chev {
    align-self: flex-start;
    margin: 0 11px 0 10px;
    font-size: 18px;
    line-height: 20px;
}
.battery {
    position: relative;
    width: 42px;
    height: 22px;
    margin-left: 1px;
    border: 2px solid #fff;
    background: #1d9a45;
    font-size: 14px;
    line-height: 18px;
    text-align: center;
}
.battery::after {
    content: "";
    position: absolute;
    top: 4px;
    right: -5px;
    width: 3px;
    height: 10px;
    background: #fff;
}
.people {
    margin-left: 26px;
}
.up {
    margin: 0 13px 0 26px;
}
.bat2 {
    margin-left: 9px;
}
.wifi {
    margin: 0 11px;
}
.pen {
    margin: 0 17px 0 14px;
}
.ime {
    font-size: 16px;
}
.ime-box {
    width: 19px;
    height: 19px;
    margin: 0 17px 0 18px;
    background: #fff;
    color: #000;
    font-size: 16px;
    line-height: 19px;
    text-align: center;
}
.clock {
    display: flex;
    flex-direction: column;
    width: 84px;
    font-size: 16px;
    text-align: center;
}
.note {
    margin: 0 24px 0 20px;
}
.edge {
    width: 6px;
    height: 50px;
    border-left: 1px solid #666;
}

.watermark {
    position: absolute;
    right: 89px;
    bottom: 39px;
    pointer-events: none;
}
.wm {
    fill: rgba(255, 255, 255, .75);
    stroke: rgba(120, 120, 120, .35);
    stroke-width: 3;
    paint-order: stroke;
}
.wm-latin {
    font: 900 80px Roboto, sans-serif;
}
.wm-cjk {
    font: 900 58px "Noto Sans CJK SC", sans-serif;
}
.wm-url {
    font: 40px "Noto Sans", sans-serif;
}
.wm-du {
    fill: none;
    stroke: #ccc;
    stroke-width: 2;
    font: bold 54px Roboto, sans-serif;
}
```
FILE: script.js
```js
// 300 dpi document at 100%: one centimetre on screen
const CM = 300 / 2.54;

function buildRuler(id, first, offset, vertical) {
    const ruler = document.getElementById(id);
    const length = vertical ? ruler.clientHeight : ruler.clientWidth;
    let ticks = '';
    let labels = '';

    for (let i = -10; offset + i * CM / 10 < length; i++) {
        const pos = Math.round(offset + i * CM / 10) + 0.5;
        if (pos < 0) continue;
        const major = i % 10 === 0;
        const size = major ? 17 : i % 5 === 0 ? 5 : 3;

        ticks += vertical ? `M17 ${pos} h${-size}` : `M${pos} 17 v${-size}`;
        if (!major) continue;

        const value = String(first + i / 10);
        if (vertical) {
            [...value].forEach((digit, n) => {
                labels += `<text x="3" y="${Math.round(pos) + 10 + n * 10}">${digit}</text>`;
            });
        } else {
            labels += `<text x="${Math.round(pos) + 3}" y="10">${value}</text>`;
        }
    }
    ruler.innerHTML = `<path d="${ticks}"/>${labels}`;
}

function drawRulers() {
    buildRuler('rulerX', 3, 2, false);
    buildRuler('rulerY', 11, 95, true);
}

window.addEventListener('resize', drawRulers);
drawRulers();
```
